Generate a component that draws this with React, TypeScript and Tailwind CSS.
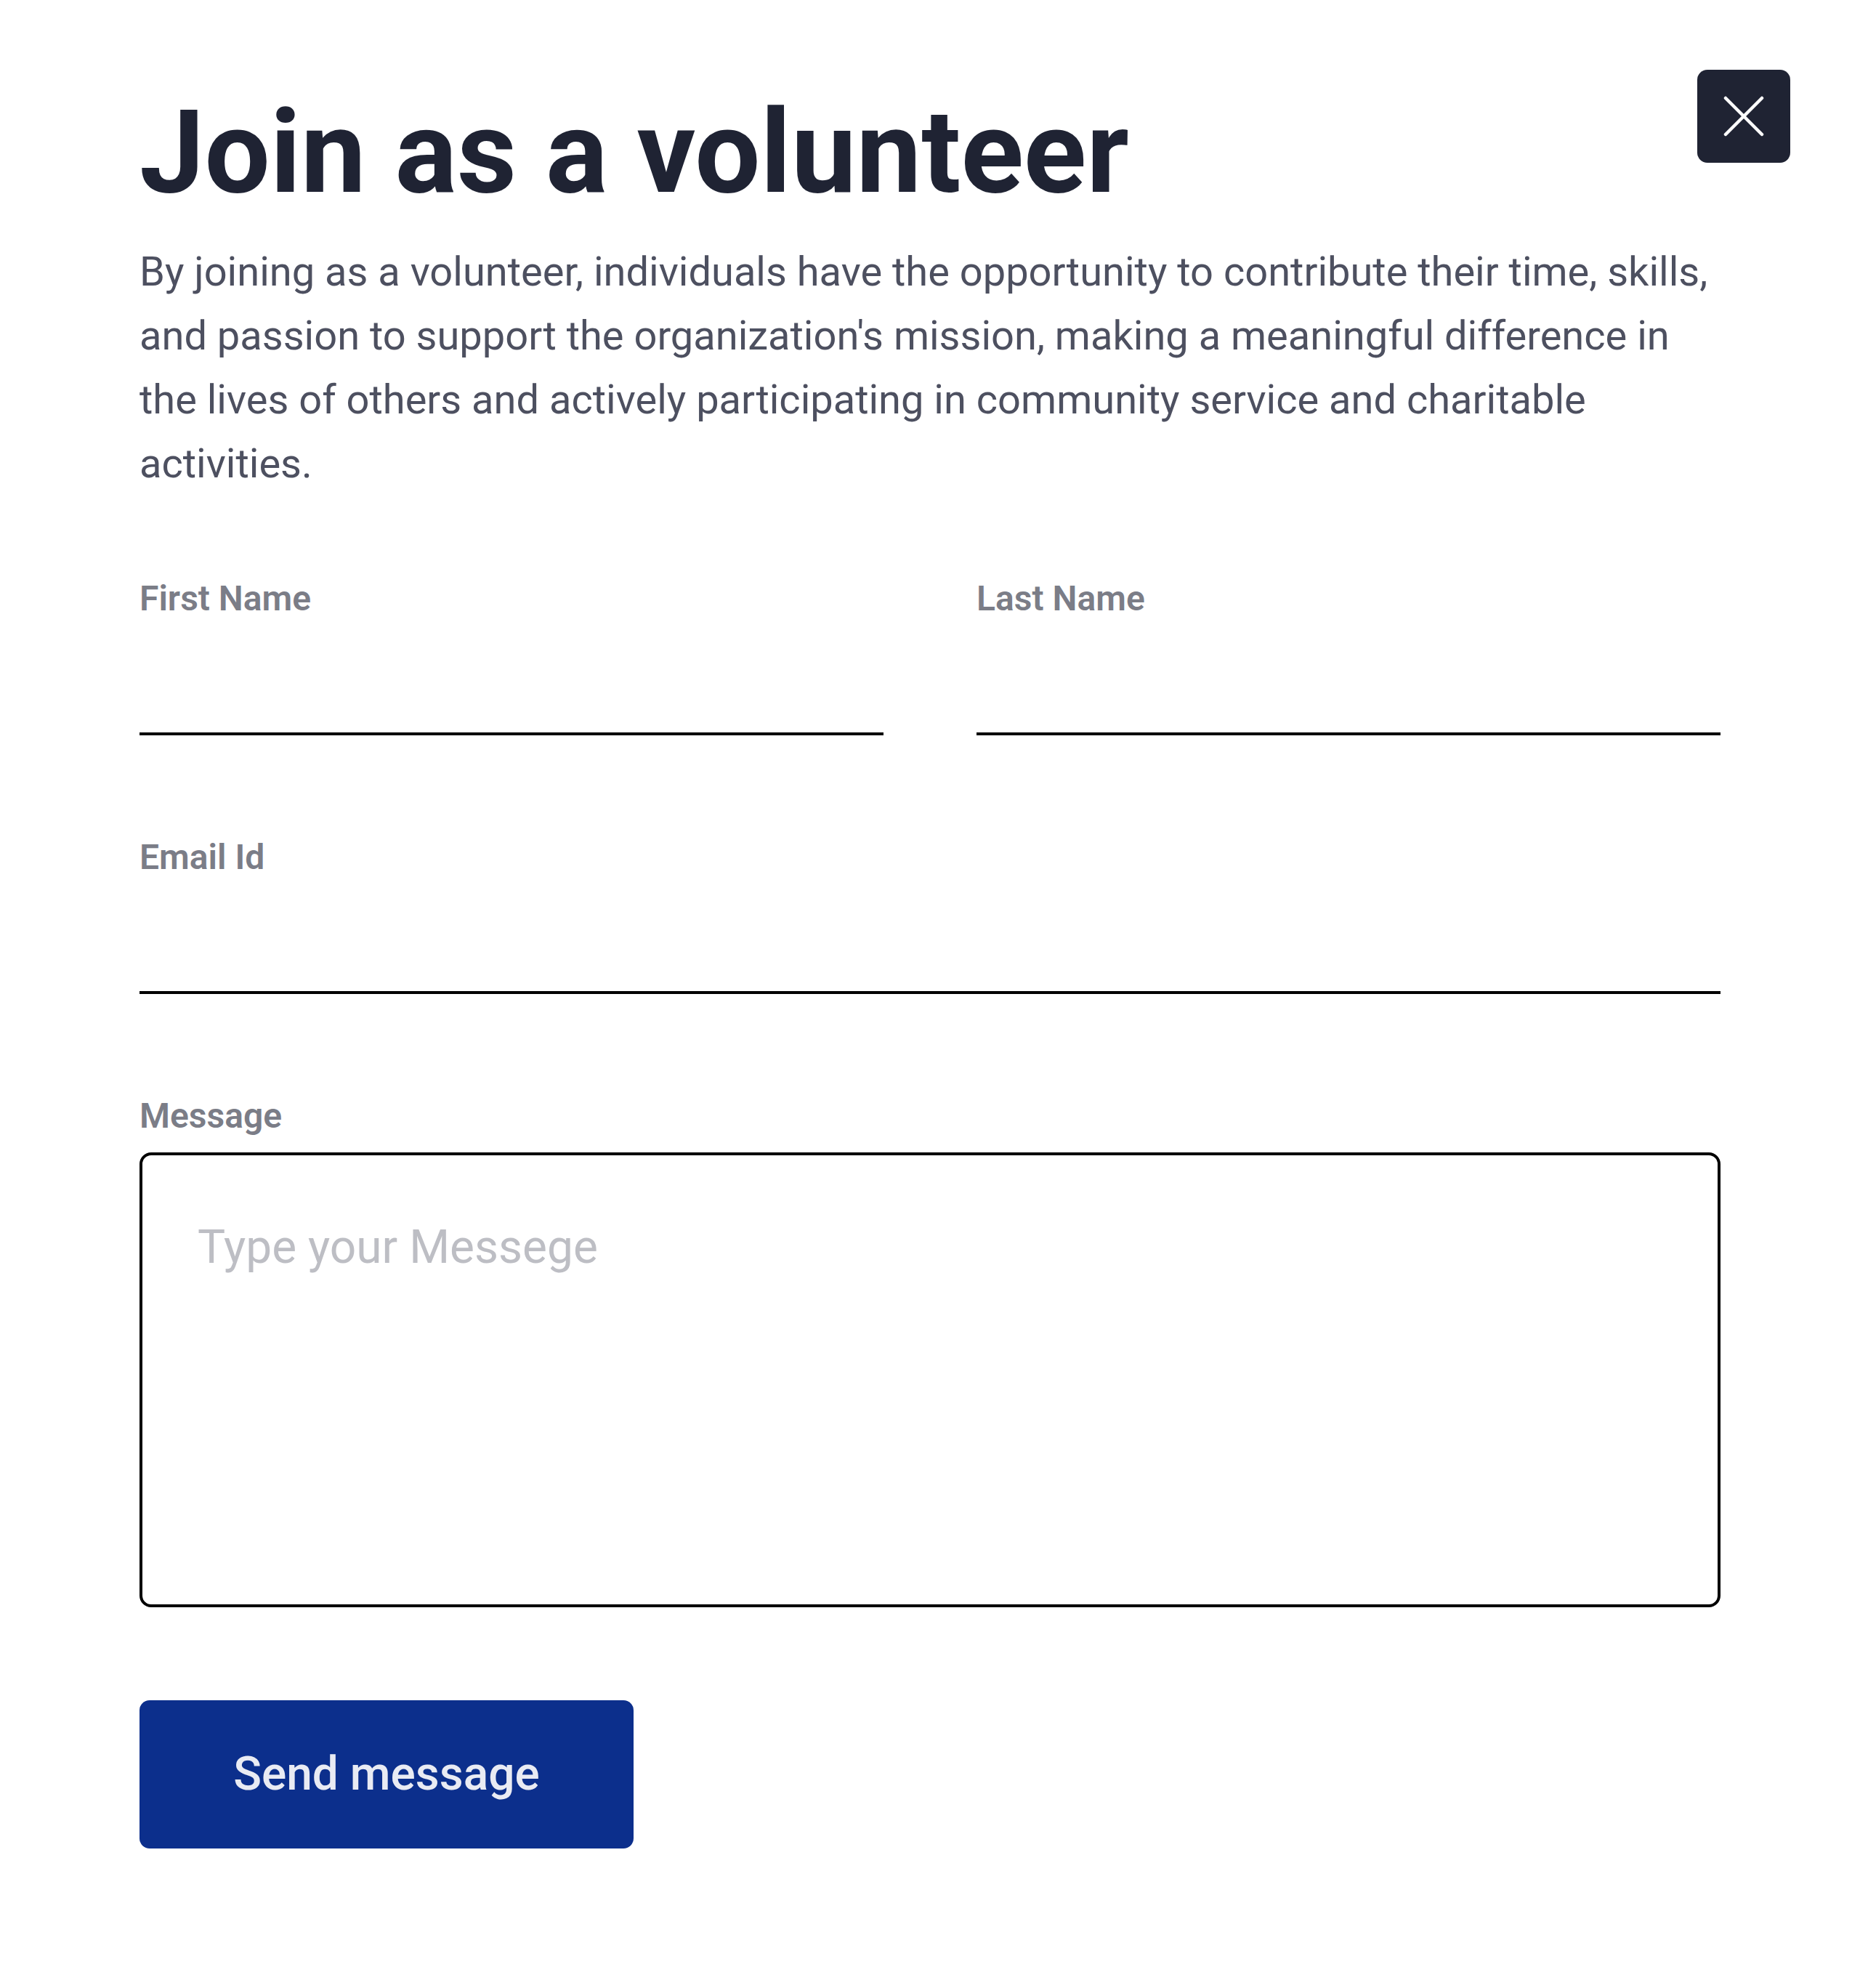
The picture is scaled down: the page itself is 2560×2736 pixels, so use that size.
import React from "react";

export default function App() {
  return (
    <div className="relative w-[2560px] min-h-[2736px] bg-white font-['Roboto',sans-serif]">
      <button
        type="button"
        aria-label="Close"
        className="absolute top-[96px] right-[96px] flex h-[128px] w-[128px] items-center justify-center rounded-[14px] bg-[#1f2333]"
      >
        <svg width="56" height="56" viewBox="0 0 56 56" fill="none">
          <line x1="3" y1="3" x2="53" y2="53" stroke="white" strokeWidth="4.5" strokeLinecap="round" />
          <line x1="53" y1="3" x2="3" y2="53" stroke="white" strokeWidth="4.5" strokeLinecap="round" />
        </svg>
      </button>

      <div className="mx-[192px] pt-[130px] pb-[193px]">
        <h1 className="text-[160px] leading-[160px] font-bold text-[#1f2333]">
          Join as a volunteer
        </h1>
        <p className="mt-[40px] text-[56px] leading-[88px] text-[#4d5060]">
          By joining as a volunteer, individuals have the opportunity to contribute their time, skills,
          and passion to support the organization's mission, making a meaningful difference in the
          lives of others and actively participating in community service and charitable activities.
        </p>

        <div className="mt-[106px] grid grid-cols-2 gap-x-[128px]">
          <div className="flex flex-col">
            <label className="text-[48px] leading-[72px] font-semibold text-[#7b7d87]">First Name</label>
            <input className="h-[152px] border-b-[4px] border-black bg-transparent outline-none" />
          </div>
          <div className="flex flex-col">
            <label className="text-[48px] leading-[72px] font-semibold text-[#7b7d87]">Last Name</label>
            <input className="h-[152px] border-b-[4px] border-black bg-transparent outline-none" />
          </div>
        </div>

        <div className="mt-[132px] flex flex-col">
          <label className="text-[48px] leading-[72px] font-semibold text-[#7b7d87]">Email Id</label>
          <input className="h-[152px] border-b-[4px] border-black bg-transparent outline-none" />
        </div>

        <div className="mt-[132px] flex flex-col">
          <label className="text-[48px] leading-[72px] font-semibold text-[#7b7d87]">Message</label>
          <textarea
            placeholder="Type your Messege"
            className="mt-[14px] h-[626px] resize-none rounded-[16px] border-[4px] border-black px-[76px] pt-[82px] text-[64px] leading-[90px] text-[#1f2333] outline-none placeholder:text-[#bdbec4]"
          />
        </div>

        <button
          type="button"
          className="mt-[128px] flex h-[204px] w-[680px] items-center justify-center rounded-[14px] bg-[#0c2f8c] text-[64px] font-medium text-[#e9ebf3]"
        >
          Send message
        </button>
      </div>
    </div>
  );
}
